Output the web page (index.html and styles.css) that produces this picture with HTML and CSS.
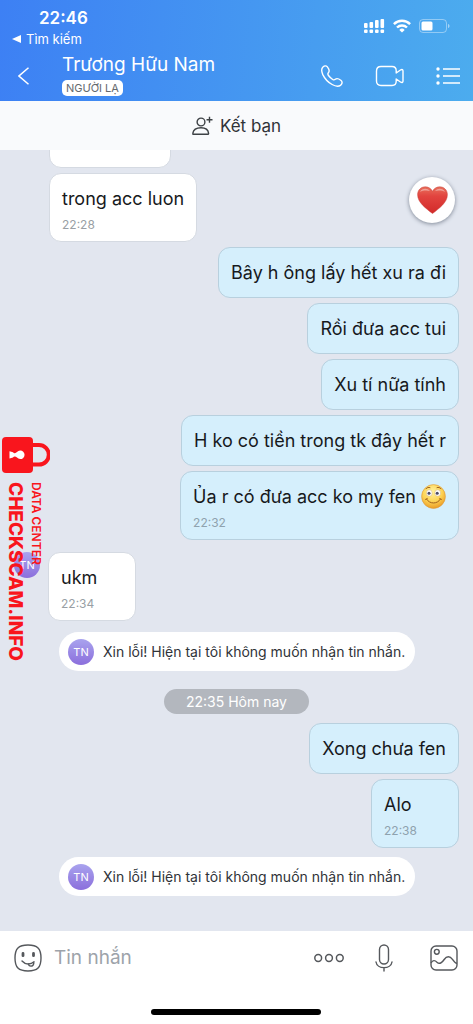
FILE: index.html
```html
<!DOCTYPE html>
<html lang="vi">
<head>
<meta charset="utf-8">
<meta name="viewport" content="width=device-width, initial-scale=1">
<title>Trương Hữu Nam</title>
<link rel="stylesheet" href="styles.css">
</head>
<body>
<div class="app">
  <header class="header">
    <div class="status">
      <div class="status-left">
        <span class="clock">22:46</span>
        <button class="return" type="button">
          <svg width="9" height="8" viewBox="0 0 9 8" aria-hidden="true"><path d="M0 4 9 0v8z" fill="#fff"/></svg>
          <span>Tìm kiếm</span>
        </button>
      </div>
      <div class="status-right">
        <svg width="21" height="16" viewBox="0 0 21 16" fill="#fff" aria-hidden="true">
          <rect x="0" y="5" width="3.600" height="5" rx="1"/><rect x="5.500" y="4" width="3.600" height="6" rx="1"/><rect x="11" y="2" width="3.600" height="8" rx="1"/><rect x="16.500" y="1" width="3.600" height="9" rx="1"/>
          <rect x="0" y="11.500" width="3.600" height="3.600" rx="1"/><rect x="5.500" y="11.500" width="3.600" height="3.600" rx="1"/><rect x="11" y="11.500" width="3.600" height="3.600" rx="1"/><rect x="16.500" y="11.500" width="3.600" height="3.600" rx="1"/>
        </svg>
        <svg width="18" height="14" viewBox="0 0 18 14" fill="none" stroke="#fff" stroke-width="2.400" aria-hidden="true">
          <path d="M.9 5.100a11.500 11.500 0 0 1 16.200 0M4 8.500a7.200 7.200 0 0 1 10 0"/><path d="M9 13.600 6.300 10.900a3.900 3.900 0 0 1 5.400 0z" fill="#fff" stroke="none"/>
        </svg>
        <svg width="31" height="14" viewBox="0 0 31 14" aria-hidden="true">
          <rect x=".5" y=".5" width="27" height="13" rx="3.500" fill="none" stroke="#fff" stroke-opacity=".4"/><rect x="2.500" y="2.500" width="11" height="9" rx="1.500" fill="#fff"/><path d="M29 5c2 .6 2 3.400 0 4z" fill="#fff" fill-opacity=".5"/>
        </svg>
      </div>
    </div>
    <div class="nav">
      <button class="icon-btn back" type="button" aria-label="Quay lại">
        <svg width="12" height="18" viewBox="0 0 12 18" fill="none" stroke="#fff" stroke-width="1.500"><path d="M10.500.8 1 9l9.500 8.200"/></svg>
      </button>
      <div class="contact">
        <h1 class="name">Trương Hữu Nam</h1>
        <span class="tag">NGƯỜI LẠ</span>
      </div>
      <div class="nav-actions">
        <button class="icon-btn" type="button" aria-label="Gọi thoại">
          <svg width="24" height="24" viewBox="0 0 24 24" fill="none" stroke="#fff" stroke-width="1.400" stroke-linejoin="round"><path d="M2.600 3.400C3.900 1.800 6 1.200 7.400 2.900c1.700 2.200 2.500 4.200 1 5.800-.9 1-.7 1.700.1 2.800 1.100 1.500 2.600 3 4.200 4 1 .6 1.700.6 2.600-.2 1.500-1.200 3.300-.7 5.500 1 2 1.600 1.500 3.800-.3 5-2.200 1.500-5 1.100-8.400-.8-3.900-2.100-7.300-5.800-9.300-9.900C1.500 7.700 1.400 5 2.600 3.400z"/></svg>
        </button>
        <button class="icon-btn" type="button" aria-label="Gọi video">
          <svg width="30" height="22" viewBox="0 0 30 22" fill="none" stroke="#fff" stroke-width="1.400" stroke-linejoin="round"><path d="M6 1.500h11c3 0 4.200 1.600 4.200 4.200V8l4.600-3.200c1.300-.7 2.200-.2 2.200 1.200v10c0 1.400-.9 1.900-2.200 1.200L21.200 14v2.300c0 2.600-1.200 4.200-4.200 4.200H6c-3 0-4.500-1.600-4.500-4.500V6C1.500 3.100 3 1.500 6 1.500z"/></svg>
        </button>
        <button class="icon-btn" type="button" aria-label="Tùy chọn">
          <svg width="24" height="18" viewBox="0 0 24 18" fill="none" stroke="#fff" stroke-width="1.500"><path d="M7 2h17M7 9h17M7 16h17"/><g fill="#fff" stroke="none"><circle cx="2" cy="2" r="1.700"/><circle cx="2" cy="9" r="1.700"/><circle cx="2" cy="16" r="1.700"/></g></svg>
        </button>
      </div>
    </div>
  </header>

  <button class="add-friend" type="button">
    <svg width="21" height="20" viewBox="0 0 21 20" fill="none" stroke="#3d4145" stroke-width="1.400" aria-hidden="true"><circle cx="9" cy="6" r="3.900"/><path d="M1.500 18.300c-.6 0-.8-.4-.7-.9.600-3.800 4-5.600 8.200-5.600s7.200 1.800 7.600 5.600c0 .5-.2.900-.7.900zM17.500.8v6M14.500 3.800h6"/></svg>
    <span>Kết bạn</span>
  </button>

  <main class="chat">
    <div class="bubble received clipped"></div>
    <div class="bubble received timed"><p class="text">trong acc luon</p><time class="time">22:28</time></div>
    <div class="bubble sent"><p class="text">Bây h ông lấy hết xu ra đi</p></div>
    <div class="bubble sent"><p class="text">Rồi đưa acc tui</p></div>
    <div class="bubble sent"><p class="text">Xu tí nữa tính</p></div>
    <div class="bubble sent"><p class="text">H ko có tiền trong tk đây hết r</p></div>
    <div class="bubble sent timed">
      <p class="text">Ủa r có đưa acc ko my fen
        <svg class="emoji" width="25" height="25" viewBox="0 0 25 25" role="img" aria-label="Mặt cười">
          <defs><radialGradient id="face" cx=".45" cy=".3" r=".75"><stop offset="0" stop-color="#fff3a0"/><stop offset=".55" stop-color="#fdd354"/><stop offset="1" stop-color="#e8931f"/></radialGradient></defs>
          <circle cx="12.500" cy="12.500" r="11.900" fill="url(#face)" stroke="#dc9a3c" stroke-width=".6"/>
          <ellipse cx="8.300" cy="9" rx="2.900" ry="3.200" fill="#fff" stroke="#c9a05a" stroke-width=".4"/><ellipse cx="16.700" cy="9" rx="2.900" ry="3.200" fill="#fff" stroke="#c9a05a" stroke-width=".4"/>
          <circle cx="8" cy="9.200" r="1.500" fill="#4a4a68"/><circle cx="16.200" cy="9.200" r="1.500" fill="#4a4a68"/>
          <path d="M5 4.800c1-1.300 2.600-1.800 4-1.200M16 3.600c1.400-.6 3-.1 4 1.200M5.500 15c3 5.400 11 5.400 14 0M4.600 15.500l1.700-1M20.400 15.500l-1.700-1" fill="none" stroke="#a0601c" stroke-width="1" stroke-linecap="round"/>
        </svg>
      </p>
      <time class="time">22:32</time>
    </div>
    <div class="incoming">
      <span class="avatar">TN</span>
      <div class="bubble received timed"><p class="text">ukm</p><time class="time">22:34</time></div>
    </div>
    <div class="notice"><span class="avatar">TN</span><span>Xin lỗi! Hiện tại tôi không muốn nhận tin nhắn.</span></div>
    <time class="date">22:35 Hôm nay</time>
    <div class="bubble sent"><p class="text">Xong chưa fen</p></div>
    <div class="bubble sent timed"><p class="text">Alo</p><time class="time">22:38</time></div>
    <div class="notice"><span class="avatar">TN</span><span>Xin lỗi! Hiện tại tôi không muốn nhận tin nhắn.</span></div>

    <button class="reaction" type="button" aria-label="Thả tim">
      <svg width="31" height="28" viewBox="0 0 31 28" aria-hidden="true">
        <defs><linearGradient id="heart" x1="0" y1="0" x2="0" y2="1"><stop offset="0" stop-color="#e8705c"/><stop offset=".35" stop-color="#e2443f"/><stop offset="1" stop-color="#d22a2a"/></linearGradient></defs>
        <path d="M15.500 27.500C9 22.500.6 16.500.6 8.700.6 4 4 .8 8.300.8c3.200 0 5.800 1.700 7.200 4.500C16.900 2.500 19.500.8 22.700.8 27 .8 30.400 4 30.400 8.700c0 7.800-8.400 13.800-14.900 18.800z" fill="url(#heart)" stroke="#c9403a" stroke-width=".5"/>
        <path d="M3 6c1.500-3.500 7-4.500 10-1-3-.8-7-.8-10 1zM18 5c3-3.500 8.500-2.500 10 1-3-1.800-7-1.800-10-1z" fill="#fff" fill-opacity=".4"/>
      </svg>
    </button>
  </main>

  <footer class="composer">
    <form class="composer-row">
      <button class="icon-btn" type="button" aria-label="Nhãn dán">
        <svg width="28" height="28" viewBox="0 0 28 28" fill="none" stroke="#55585c" stroke-width="1.400" stroke-linecap="round"><path d="M14 1c9.500 0 13 3.500 13 13s-3.500 13-13 13S1 23.500 1 14 4.500 1 14 1z"/><path d="M8 17c3.500 3.800 8.500 4 12 .8M14.500 19.800c.1 3 4.700 3.200 5.200-.2l.1-1.500"/><path d="M9 9.500v2.200M19.500 9.500v2.200" stroke-width="2.800"/></svg>
      </button>
      <input class="field" type="text" placeholder="Tin nhắn" aria-label="Tin nhắn">
      <div class="composer-actions">
        <button class="icon-btn" type="button" aria-label="Thêm">
          <svg width="30" height="10" viewBox="0 0 30 10" fill="none" stroke="#55585c" stroke-width="1.500"><circle cx="4.200" cy="5" r="3.400"/><circle cx="15" cy="5" r="3.400"/><circle cx="25.800" cy="5" r="3.400"/></svg>
        </button>
        <button class="icon-btn" type="button" aria-label="Ghi âm">
          <svg width="18" height="28" viewBox="0 0 18 28" fill="none" stroke="#55585c" stroke-width="1.400" stroke-linecap="round"><rect x="4.500" y="1" width="9" height="19" rx="4.500"/><path d="M1 18c1 7.500 15 7.500 16 0M9 24v3"/></svg>
        </button>
        <button class="icon-btn photo" type="button" aria-label="Gửi ảnh">
          <svg width="28" height="26" viewBox="0 0 28 26" fill="none" stroke="#55585c" stroke-width="1.400"><rect x="1" y="1" width="26" height="24" rx="5"/><circle cx="6.800" cy="6.800" r="2.400"/><path d="M1 18c1.800-3.200 4-2.800 6-.7 2.500 2.300 5 .5 7.200-2.800 2.600-3.800 6-3.300 8-.4 1.500 2.200 2.700 4 4.800 4.400"/></svg>
        </button>
      </div>
    </form>
    <div class="home-bar"></div>
  </footer>

  <div class="watermark">
    <svg width="48" height="36" viewBox="0 0 48 36" aria-hidden="true">
      <path d="M29 8h8a9.800 9.800 0 0 1 0 19.600h-8" fill="none" stroke="#f9151d" stroke-width="4"/>
      <rect width="31" height="36" rx="4" fill="#f9151d"/>
      <path d="M7.500 14.200l3.500 1c.8 1.300 2.800 1.300 4-.2a4.300 4.300 0 1 1 0 5.600c-1.200-1.500-3.200-1.500-4-.2l-3.500 1z" fill="#fff"/>
    </svg>
    <div class="watermark-text">
      <span class="watermark-sub">DATA CENTER</span>
      <span class="watermark-main">CHECKSCAM.INFO</span>
    </div>
  </div>
</div>
</body>
</html>
```
FILE: styles.css
```css
* { box-sizing: border-box; }
body { margin: 0; font-family: Inter, "Noto Sans", sans-serif; color: #17191c; }
button { border: 0; padding: 0; background: none; font: inherit; color: inherit; }
svg { display: block; flex: none; }

.app { position: relative; display: flex; flex-direction: column; height: 100vh; overflow: hidden; }

.header { flex: none; padding: 8px 13px 5px 12px; color: #fff; background: linear-gradient(95deg, #3d80f4, #4cacee); }
.status { display: flex; justify-content: space-between; }
.status-left { display: flex; flex-direction: column; }
.clock { padding-left: 27px; font-size: 17px; line-height: 20px; font-weight: 600; }
.return { display: flex; align-items: center; gap: 5px; font-size: 13px; line-height: 20px; height: 22px; }
.status-right { display: flex; align-items: center; gap: 8px; height: 35px; padding-right: 10px; }
.nav { display: flex; align-items: center; gap: 32px; }
.icon-btn { display: flex; flex: none; }
.nav .icon-btn { padding-top: 6px; }
.back { margin-left: 6px; }
.contact { flex: 1; display: flex; flex-direction: column; align-items: flex-start; }
.name { margin: 0; font-size: 19px; line-height: 30px; font-weight: 400; }
.tag { padding: 0 4px; border-radius: 5px; background: #fff; color: #65696e; font-size: 11px; line-height: 16px; }
.nav-actions { display: flex; align-items: center; gap: 31px; }

.add-friend { flex: none; display: flex; align-items: center; justify-content: center; gap: 7px; height: 49px; background: #f9fafc; font-size: 17px; color: #303338; }

.chat { position: relative; flex: 1; min-height: 0; overflow: hidden; display: flex; flex-direction: column; justify-content: flex-end; align-items: flex-start; gap: 5px; padding: 0 14px 35px 49px; background: #e2e6ef; }
.bubble { flex: none; padding: 12px; border: 1px solid #d5dae2; border-radius: 12px; background: #fff; }
.timed { padding-bottom: 8px; }
.clipped { width: 122px; height: 51px; }
.sent { align-self: flex-end; background: #d5effc; border-color: #b8d0de; }
.text { display: flex; align-items: center; gap: 5px; margin: 0; height: 25px; font-size: 18px; line-height: 25px; white-space: nowrap; }
.time { display: block; min-width: 62px; padding-top: 6px; font-size: 12px; line-height: 16px; color: #999fa5; }
.sent .time { color: #8fa2ae; }
.incoming { flex: none; display: flex; align-items: flex-start; gap: 8px; margin: 7px 0 2px -35px; }
.avatar { flex: none; width: 26px; height: 26px; border-radius: 50%; background: linear-gradient(#a9a3ee, #8b6fdc); color: #fff; font-size: 11px; line-height: 26px; text-align: center; }
.notice { flex: none; display: flex; align-items: center; gap: 9px; height: 39px; margin: 4px 0 0 10px; padding: 0 10px 0 9px; border-radius: 20px; background: #fff; color: #303338; font-size: 14px; white-space: nowrap; }
.date { flex: none; align-self: center; margin: 13px 35px 4px 0; padding: 0 22px; border-radius: 13px; background: #b3b7be; color: #fff; font-size: 14px; line-height: 25px; }
.reaction { position: absolute; top: 27px; right: 18px; display: flex; align-items: center; justify-content: center; width: 46px; height: 46px; border-radius: 50%; background: #fff; box-shadow: 0 1px 4px #7f8896; }

.composer { flex: none; padding: 13px 15px 9px 14px; background: #fff; }
.composer-row { display: flex; align-items: center; gap: 12px; height: 28px; margin: 0; }
.field { flex: 1; min-width: 0; padding: 0; border: 0; outline: 0; background: none; font: 400 19px/28px Inter, "Noto Sans", sans-serif; color: #17191c; }
.field::placeholder { color: #9da3aa; opacity: 1; }
.composer-actions { display: flex; align-items: center; gap: 31px; }
.photo { margin-left: 6px; }
.home-bar { width: 170px; height: 6px; margin: 37px auto 0; border-radius: 3px; background: #000; }

.watermark { position: absolute; left: 2px; top: 437px; color: #f9151d; white-space: nowrap; }
.watermark-text { display: flex; flex-direction: column; writing-mode: vertical-rl; margin-top: 9px; width: 42px; }
.watermark-sub { font-size: 12px; line-height: 16px; font-weight: 600; }
.watermark-main { font-size: 19px; line-height: 26px; font-weight: 800; }
```
